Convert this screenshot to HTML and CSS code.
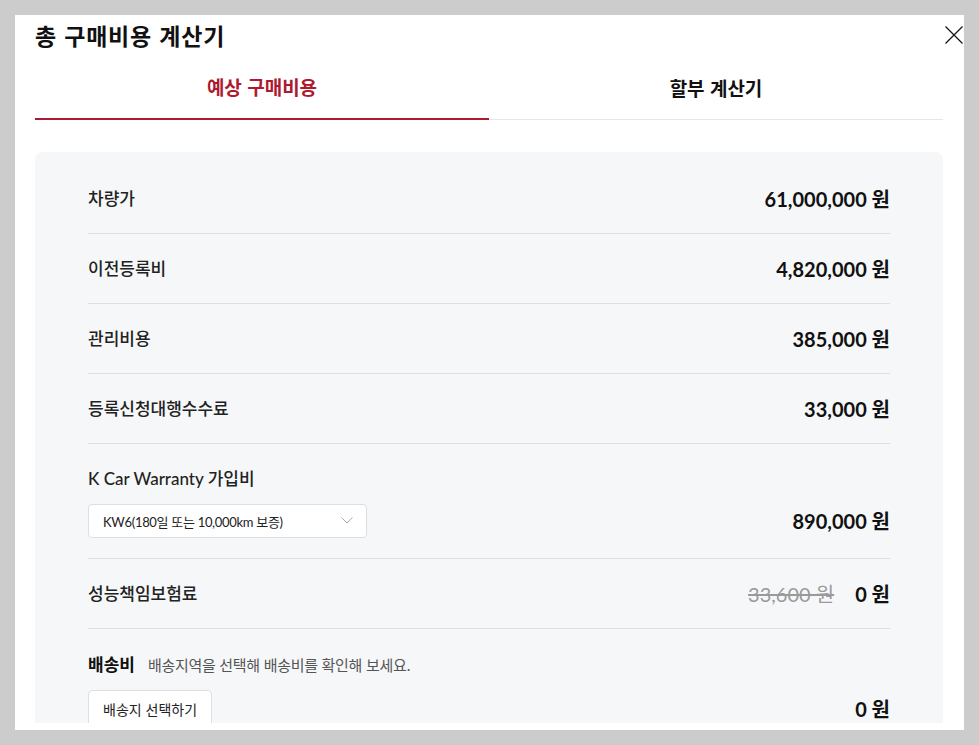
FILE: index.html
```html
<!DOCTYPE html>
<html lang="ko">
<head>
<meta charset="utf-8">
<title>총 구매비용 계산기</title>
<link rel="stylesheet" href="styles.css">
</head>
<body>
<div class="modal">
  <div class="modal-head">
    <h1 class="title">총 구매비용 계산기</h1>
    <button class="close" aria-label="닫기">
      <svg width="18" height="18" viewBox="0 0 18 18"><path d="M0.5 0.5 L17.5 17.5 M17.5 0.5 L0.5 17.5" stroke="#111" stroke-width="1.2" fill="none"/></svg>
    </button>
  </div>
  <div class="tabs">
    <div class="tab active">예상 구매비용</div>
    <div class="tab">할부 계산기</div>
  </div>
  <div class="scroll">
    <div class="panel">
      <div class="row">
        <span class="label">차량가</span>
        <span class="value">61,000,000 원</span>
      </div>
      <div class="row">
        <span class="label">이전등록비</span>
        <span class="value">4,820,000 원</span>
      </div>
      <div class="row">
        <span class="label">관리비용</span>
        <span class="value">385,000 원</span>
      </div>
      <div class="row">
        <span class="label">등록신청대행수수료</span>
        <span class="value">33,000 원</span>
      </div>
      <div class="row row-tall">
        <div class="col">
          <span class="label">K Car Warranty 가입비</span>
          <div class="select">
            <span>KW6(180일 또는 10,000km 보증)</span>
            <svg width="12" height="7" viewBox="0 0 12 7"><path d="M0.5 0.5 L6 6 L11.5 0.5" stroke="#a9adb3" stroke-width="1" fill="none"/></svg>
          </div>
        </div>
        <span class="value">890,000 원</span>
      </div>
      <div class="row">
        <span class="label">성능책임보험료</span>
        <span class="values">
          <span class="strike">33,600 원</span>
          <span class="value">0 원</span>
        </span>
      </div>
      <div class="row row-tall last">
        <div class="col col-ship">
          <div class="label-line">
            <span class="label strong">배송비</span>
            <span class="desc">배송지역을 선택해 배송비를 확인해 보세요.</span>
          </div>
          <button class="btn">배송지 선택하기</button>
        </div>
        <span class="value value-ship">0 원</span>
      </div>
    </div>
  </div>
</div>
</body>
</html>
```
FILE: styles.css
```css
* { box-sizing: border-box; }
html, body { margin: 0; }
body {
  background: #cccccc;
  padding: 15px;
  font-family: Lato, "Noto Sans CJK KR", "Noto Sans", sans-serif;
  color: #111;
}
.modal {
  position: relative;
  width: 949px;
  height: 715px;
  background: #fff;
  padding: 0 21px 7px 20px;
  display: flex;
  flex-direction: column;
  overflow: hidden;
}
.modal-head {
  height: 42px;
  display: flex;
  align-items: center;
  padding-bottom: 3px;
}
.title {
  margin: 0;
  font-family: "Noto Sans CJK KR", sans-serif;
  font-size: 23px;
  font-weight: 700;
  color: #111;
  letter-spacing: 0.8px;
}
.close {
  position: absolute;
  right: 1px;
  top: 11px;
  width: 18px;
  height: 18px;
  padding: 0;
  border: 0;
  background: none;
  display: block;
}
.close svg { display: block; }
.tabs {
  display: flex;
  height: 63px;
  border-bottom: 1px solid #e6e7ea;
}
.tab {
  flex: 1;
  display: flex;
  align-items: center;
  justify-content: center;
  font-family: "Noto Sans CJK KR", sans-serif;
  font-size: 19px;
  font-weight: 700;
  color: #111;
  padding-bottom: 2px;
}
.tab.active {
  color: #ad1a30;
  border-bottom: 2px solid #ad1a30;
  margin-bottom: -1px;
}
.scroll {
  flex: 1;
  overflow: hidden;
  padding-top: 32px;
}
.panel {
  background: #f6f7f9;
  border-radius: 8px;
  padding: 12px 53px 0 53px;
}
.row {
  display: flex;
  justify-content: space-between;
  align-items: center;
  height: 70px;
  border-bottom: 1px solid #dcdfe6;
}
.row-tall {
  height: auto;
  align-items: flex-end;
  padding: 24px 0 20px;
}
.row-tall .value { line-height: 34px; }
.row.last { border-bottom: 0; padding-top: 25px; padding-bottom: 40px; }
.col {
  display: flex;
  flex-direction: column;
  align-items: flex-start;
  gap: 14px;
}
.col-ship { gap: 14px; }
.label {
  font-size: 17px;
  font-weight: 500;
  color: #222;
  line-height: 22px;
}
.label-line {
  display: flex;
  align-items: center;
  gap: 13px;
}
.label.strong { font-weight: 700; color: #111; }
.desc {
  font-family: "Noto Sans CJK KR", sans-serif;
  font-size: 15px;
  color: #555;
  line-height: 22px;
  letter-spacing: -0.3px;
}
.value {
  font-size: 20px;
  font-weight: 700;
  color: #111;
  line-height: 24px;
}
.row-tall .value-ship { line-height: 38px; }
.values {
  display: flex;
  align-items: center;
  gap: 21px;
}
.strike {
  font-size: 20px;
  color: #9a9a9a;
  text-decoration: line-through;
  line-height: 24px;
}
.select {
  width: 279px;
  height: 34px;
  background: #fff;
  border: 1px solid #dcdfe4;
  border-radius: 4px;
  display: flex;
  align-items: center;
  justify-content: space-between;
  padding: 0 13px 0 14px;
  font-size: 13px;
  letter-spacing: -0.3px;
  color: #222;
}
.select svg { display: block; margin-top: -2px; }
.btn {
  height: 38px;
  padding: 0 14px;
  background: #fff;
  border: 1px solid #dcdfe4;
  border-radius: 4px;
  font-family: "Noto Sans CJK KR", sans-serif;
  font-size: 14px;
  color: #222;
}
```
